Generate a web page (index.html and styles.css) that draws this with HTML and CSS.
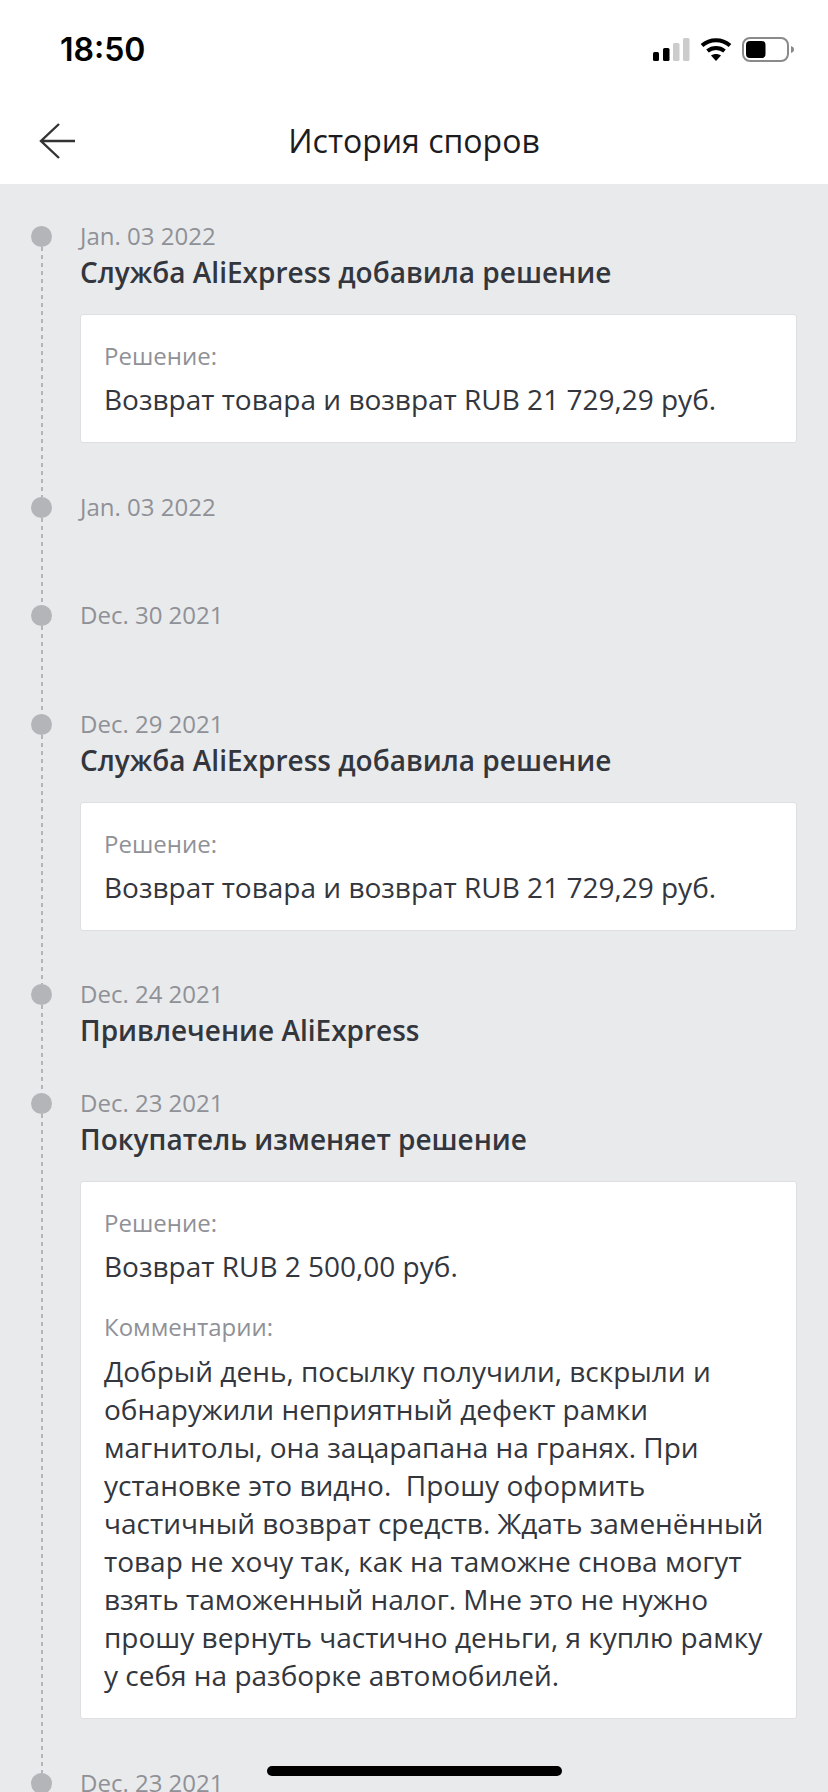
FILE: index.html
```html
<!DOCTYPE html>
<html lang="ru">
<head>
<meta charset="UTF-8">
<meta name="viewport" content="width=device-width, initial-scale=1.0">
<link rel="stylesheet" href="styles.css">
</head>
<body>
<div class="screen">
    <header class="top">
        <div class="status">
            <span class="time">18:50</span>
            <svg class="status-icons" width="146" height="28" viewBox="650 36 146 28">
                <rect x="653" y="52" width="6" height="9" rx="1.5" fill="#000"/>
                <rect x="663" y="48" width="6.5" height="13" rx="1.5" fill="#000"/>
                <rect x="673" y="43" width="6.5" height="18" rx="1.5" fill="#ccc"/>
                <rect x="683" y="38" width="6.5" height="23" rx="1.5" fill="#ccc"/>
                <path d="M702 45.5 C710 38.5 722 38.5 730 45.5" fill="none" stroke="#000" stroke-width="4"/>
                <path d="M707.5 51 C712.5 47 719.5 47 724.5 51" fill="none" stroke="#000" stroke-width="4"/>
                <path d="M711 55.5 L716 61 L721 55.5 C718 53.5 714 53.5 711 55.5 Z" fill="#000"/>
                <rect x="743" y="38" width="45" height="23" rx="7" fill="none" stroke="#8a8a8a" stroke-width="2"/>
                <rect x="746" y="41" width="19.5" height="17" rx="4" fill="#000"/>
                <path d="M791 46 C793.5 47 794 48 794 49.5 C794 51 793.5 52 791 53 Z" fill="#8a8a8a"/>
            </svg>
        </div>
        <nav class="bar">
            <svg class="back" width="38" height="38" viewBox="0 0 38 38">
                <path d="M21 2 L3 19 L21 36 M3 19 L37 19" fill="none" stroke="#333" stroke-width="2.4"/>
            </svg>
            <h1 class="title">История споров</h1>
        </nav>
    </header>

    <main class="timeline">
        <div class="item has-card">
            <div class="date">Jan. 03 2022</div>
            <div class="what">Служба AliExpress добавила решение</div>
            <div class="card">
                <div class="label">Решение:</div>
                <div class="value">Возврат товара и возврат RUB 21 729,29 руб.</div>
            </div>
        </div>
        <div class="item">
            <div class="date">Jan. 03 2022</div>
            <div class="what"></div>
        </div>
        <div class="item">
            <div class="date">Dec. 30 2021</div>
            <div class="what"></div>
        </div>
        <div class="item has-card">
            <div class="date">Dec. 29 2021</div>
            <div class="what">Служба AliExpress добавила решение</div>
            <div class="card">
                <div class="label">Решение:</div>
                <div class="value">Возврат товара и возврат RUB 21 729,29 руб.</div>
            </div>
        </div>
        <div class="item">
            <div class="date">Dec. 24 2021</div>
            <div class="what">Привлечение AliExpress</div>
        </div>
        <div class="item has-card">
            <div class="date">Dec. 23 2021</div>
            <div class="what">Покупатель изменяет решение</div>
            <div class="card">
                <div class="label">Решение:</div>
                <div class="value">Возврат RUB 2 500,00 руб.</div>
                <div class="label comment-label">Комментарии:</div>
                <div class="comment">Добрый день, посылку получили, вскрыли и<br>обнаружили неприятный дефект рамки<br>магнитолы, она зацарапана на гранях. При<br>установке это видно.&nbsp; Прошу оформить<br>частичный возврат средств. Ждать заменённый<br>товар не хочу так, как на таможне снова могут<br>взять таможенный налог. Мне это не нужно<br>прошу вернуть частично деньги, я куплю рамку<br>у себя на разборке автомобилей.</div>
            </div>
        </div>
        <div class="item">
            <div class="date">Dec. 23 2021</div>
        </div>
    </main>

    <div class="home-bar"></div>
</div>
</body>
</html>
```

FILE: styles.css
```css
* {
    box-sizing: border-box;
}
body {
    margin: 0;
    font-family: "Open Sans", sans-serif;
    color: #33363d;
}
.screen {
    position: relative;
    width: 828px;
    height: 1792px;
    overflow: hidden;
    background-color: #e9eaec;
}

/* white head with status bar and title */
.top {
    height: 184px;
    background-color: #fff;
}
.status {
    display: flex;
    justify-content: space-between;
    align-items: flex-start;
    height: 96px;
    padding: 30px 32px 0 60px;
}
.time {
    font-family: Inter, sans-serif;
    font-size: 32px;
    line-height: 40px;
    font-weight: 600;
    letter-spacing: 0;
    color: #000;
}
.status-icons {
    display: block;
    margin-top: 6px;
}
.bar {
    display: flex;
    justify-content: center;
    align-items: center;
    position: relative;
    height: 88px;
}
.back {
    position: absolute;
    left: 38px;
    top: 26px;
}
.title {
    margin: 0;
    font-size: 32px;
    font-weight: 400;
    color: #1c1c1f;
}

/* timeline */
.timeline {
    padding-top: 34px;
    padding-left: 41px;
}
.item {
    position: relative;
    min-height: 108.5px;
    padding: 0 31px 36.5px 39px;
}
.item::before {
    content: "";
    position: absolute;
    left: -10px;
    top: 8px;
    width: 21px;
    height: 21px;
    border-radius: 50%;
    background-color: #b3b5b9;
}
/* dashed line down to next dot */
.item::after {
    content: "";
    position: absolute;
    left: 0;
    top: 29px;
    bottom: -8px;
    width: 2px;
    background-image: linear-gradient(#b3b5b9 50%, transparent 50%);
    background-size: 2px 8px;
}
.date {
    font-size: 24px;
    line-height: 36px;
    color: #8f9197;
}
.what {
    min-height: 36px;
    font-size: 28px;
    line-height: 36px;
    font-weight: 600;
    color: #33363d;
}
.card {
    margin-top: 24px;
    padding: 23px 23px 24px;
    background-color: #fff;
    border: 1px solid #dedfe2;
    border-radius: 3px;
}
.has-card {
    padding-bottom: 45.5px;
}
.label {
    font-size: 24px;
    line-height: 36px;
    color: #8f9197;
}
.value {
    margin-top: 6px;
    font-size: 28px;
    line-height: 38px;
}
.comment-label {
    margin-top: 24px;
}
.comment {
    margin-top: 7px;
    font-size: 28px;
    line-height: 38.1px;
}

.home-bar {
    position: absolute;
    left: 267px;
    top: 1766px;
    width: 295px;
    height: 10px;
    border-radius: 5px;
    background-color: #000;
}
```
